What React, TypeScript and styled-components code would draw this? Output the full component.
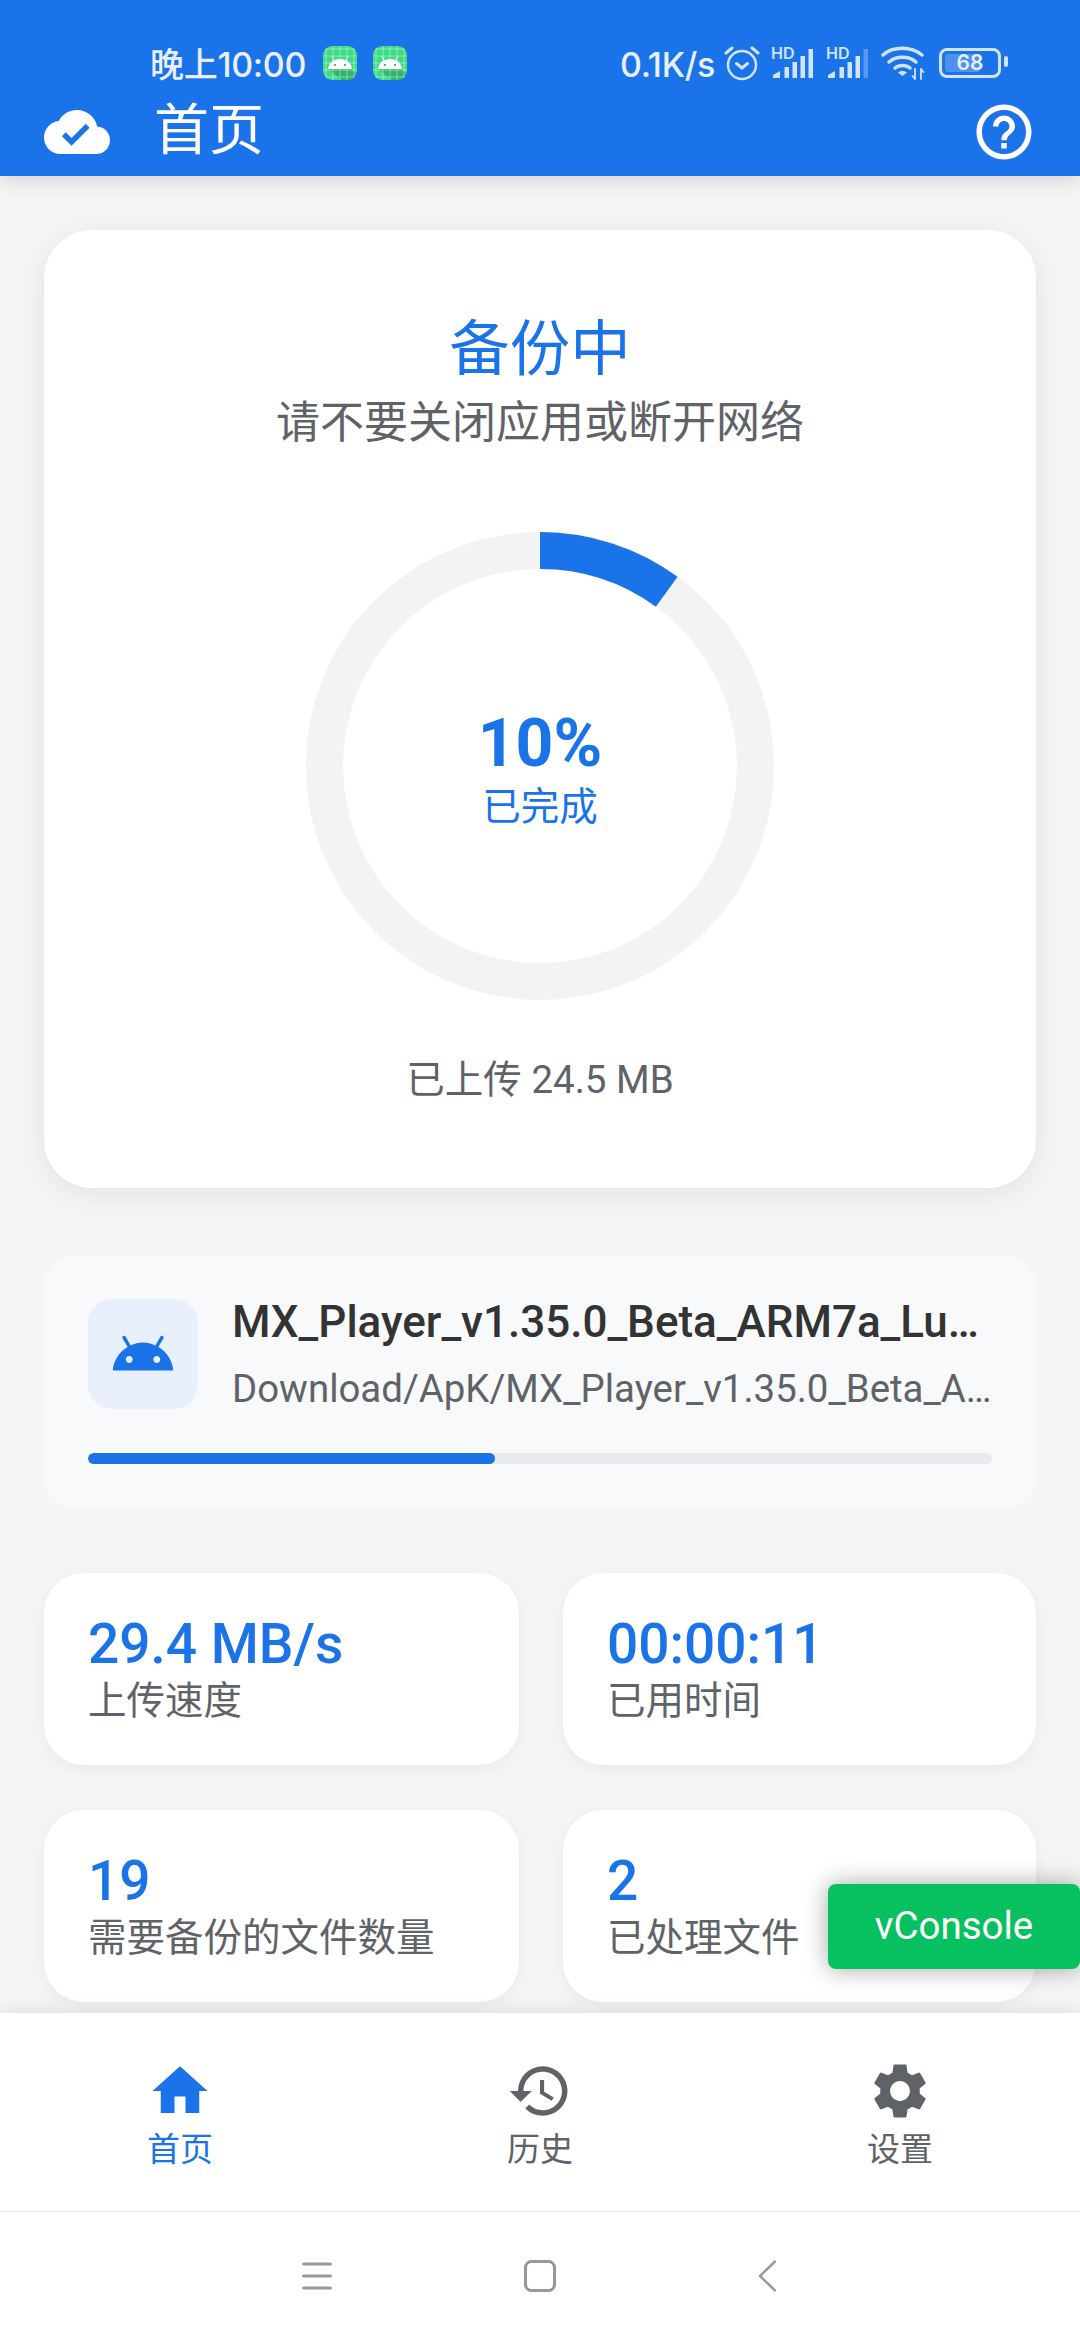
import styled, { createGlobalStyle } from "styled-components";
import { MdCloudDone, MdHelpOutline, MdHome, MdHistory, MdSettings } from "react-icons/md";

const BLUE = "#1a73e8";
const GREY = "#5f6368";

const GlobalStyle = createGlobalStyle`
  html, body { margin: 0; padding: 0; background: #f5f5f5; }
  * { box-sizing: border-box; }
  body { font-family: Roboto, "Noto Sans CJK SC", sans-serif; }
`;

const Page = styled.div`
  position: relative;
  width: 1080px;
  height: 2340px;
  display: flex;
  flex-direction: column;
  overflow: hidden;
  background: #f5f5f5;
`;

const Header = styled.header`
  height: 176px;
  flex: none;
  background: ${BLUE};
  box-shadow: 0 6px 18px rgba(0, 0, 0, 0.12);
  position: relative;
  z-index: 2;
  display: flex;
  flex-direction: column;
`;

const StatusBar = styled.div`
  height: 92px;
  padding: 34px 79px 0 150px;
  display: flex;
  align-items: center;
  justify-content: space-between;
  color: #e8f0fe;
`;

const StatusGroup = styled.div`
  display: flex;
  align-items: center;
`;

const StatusText = styled.span`
  font-family: Inter, "Noto Sans CJK SC", sans-serif;
  font-size: 34px;
  font-weight: 500;
  letter-spacing: -0.3px;
  line-height: 40px;
  margin-top: 3px;
`;

const AppBadges = styled.div`
  display: flex;
  gap: 16px;
  margin-left: 17px;
`;

const StatusIcons = styled.div`
  display: flex;
  align-items: center;
  gap: 11px;
  margin-left: 9px;
`;

const Battery = styled.div`
  position: relative;
  width: 62px;
  height: 30px;
  margin-left: 14px;
  border: 3.5px solid #d2e3fc;
  border-radius: 8px;
  font-family: Inter, sans-serif;
  font-size: 21px;
  font-weight: 600;
  line-height: 23px;
  text-align: center;
  color: #e8f0fe;
  &::before {
    content: "";
    position: absolute;
    left: 3px;
    top: 3px;
    bottom: 3px;
    width: 35px;
    background: rgba(255, 255, 255, 0.22);
    border-radius: 3px;
  }
  &::after {
    content: "";
    position: absolute;
    right: -10px;
    top: 5px;
    width: 4px;
    height: 11px;
    background: #d2e3fc;
    border-radius: 2px;
  }
`;

const BatteryLevel = styled.span`
  position: relative;
`;

const TitleRow = styled.div`
  flex: 1;
  padding: 0 43px 4px 44px;
  display: flex;
  align-items: center;
  color: #fff;
`;

const Title = styled.h1`
  margin: -4px 0 0 44px;
  flex: 1;
  font-size: 55px;
  font-weight: 400;
  line-height: 60px;
`;

const Main = styled.main`
  flex: 1;
  padding: 54px 44px 0;
  display: flex;
  flex-direction: column;
  overflow: hidden;
`;

const HeroCard = styled.section`
  height: 958px;
  flex: none;
  background: #fff;
  border-radius: 48px;
  box-shadow: 0 6px 30px rgba(0, 0, 0, 0.08);
  padding-top: 78px;
  display: flex;
  flex-direction: column;
  align-items: center;
`;

const HeroTitle = styled.h2`
  margin: 0;
  font-size: 60.500px;
  font-weight: 400;
  line-height: 84px;
  color: ${BLUE};
`;

const HeroSub = styled.p`
  margin: 0;
  font-size: 44px;
  line-height: 62px;
  color: ${GREY};
`;

const Ring = styled.div`
  position: relative;
  width: 468px;
  height: 468px;
  margin-top: 78px;
`;

const RingCenter = styled.div`
  position: absolute;
  inset: 0;
  padding-top: 8px;
  display: flex;
  flex-direction: column;
  align-items: center;
  justify-content: center;
  color: ${BLUE};
`;

const Percent = styled.div`
  font-size: 66px;
  font-weight: 700;
  line-height: 72px;
`;

const RingLabel = styled.div`
  margin-top: 2px;
  font-size: 38.500px;
  line-height: 50px;
`;

const Uploaded = styled.div`
  margin-top: 54px;
  font-size: 38.500px;
  line-height: 52px;
  color: ${GREY};
`;

const FileCard = styled.section`
  margin-top: 67px;
  flex: none;
  background: #f8f9fa;
  border-radius: 32px;
  padding: 44px;
`;

const FileRow = styled.div`
  height: 110px;
  display: flex;
  align-items: center;
  gap: 34px;
`;

const FileIcon = styled.div`
  width: 110px;
  height: 110px;
  flex: none;
  display: flex;
  align-items: center;
  justify-content: center;
  background: #e8f0fe;
  border-radius: 24px;
`;

const FileInfo = styled.div`
  flex: 1;
  min-width: 0;
`;

const FileName = styled.div<{ $muted?: boolean }>`
  font-size: ${({ $muted }) => ($muted ? "38.4px" : "44px")};
  font-weight: ${({ $muted }) => ($muted ? 400 : 500)};
  line-height: ${({ $muted }) => ($muted ? "52px" : "56px")};
  margin-top: ${({ $muted }) => ($muted ? "13px" : "0")};
  color: ${({ $muted }) => ($muted ? GREY : "#333")};
  white-space: nowrap;
  overflow: hidden;
  text-overflow: ellipsis;
`;

const Track = styled.div`
  height: 11px;
  margin-top: 44px;
  background: #e8eaed;
  border-radius: 6px;
  overflow: hidden;
`;

const Fill = styled.div`
  height: 100%;
  background: ${BLUE};
  border-radius: 6px;
`;

const StatGrid = styled.section`
  margin-top: 65px;
  display: grid;
  grid-template-columns: 475px 473px;
  grid-auto-rows: 192px;
  column-gap: 44px;
  row-gap: 45px;
`;

const StatCard = styled.div`
  background: #fff;
  border-radius: 40px;
  box-shadow: 0 4px 16px rgba(0, 0, 0, 0.05);
  padding: 40px 44px 0;
`;

const StatValue = styled.div`
  font-size: 55px;
  font-weight: 500;
  line-height: 62px;
  color: ${BLUE};
`;

const StatLabel = styled.div`
  font-size: 38.500px;
  line-height: 52px;
  color: ${GREY};
`;

const BottomNav = styled.nav`
  height: 198px;
  flex: none;
  background: #fff;
  box-shadow: 0 -4px 16px rgba(0, 0, 0, 0.08);
  position: relative;
  display: grid;
  grid-template-columns: repeat(3, 1fr);
`;

const Tab = styled.a<{ $active?: boolean }>`
  padding-top: 45px;
  display: flex;
  flex-direction: column;
  align-items: center;
  font-size: 33px;
  line-height: 44px;
  color: ${({ $active }) => ($active ? BLUE : GREY)};
`;

const TabIcon = styled.div`
  height: 66px;
  margin-bottom: 4px;
  font-size: 66px;
  line-height: 0;
`;

const SystemBar = styled.div`
  height: 129px;
  flex: none;
  background: #fff;
  border-top: 1px solid #e3e3e3;
  position: relative;
  display: grid;
  grid-template-columns: 302px 30px 192px 32px 202px 18px;
  align-items: center;
`;

const SysCell = styled.div<{ $col: number }>`
  grid-column: ${({ $col }) => $col};
  display: flex;
  line-height: 0;
`;

const VConsole = styled.div`
  position: absolute;
  left: 828px;
  top: 1884px;
  width: 252px;
  height: 85px;
  padding-bottom: 3px;
  display: flex;
  align-items: center;
  justify-content: center;
  background: #07c160;
  border-radius: 8px;
  box-shadow: 0 0 24px rgba(0, 0, 0, 0.35);
  color: #fff;
  font-size: 38.500px;
  z-index: 5;
`;

const AppBadge = () => (
  <svg width="34" height="34" viewBox="0 0 34 34">
    <defs>
      <clipPath id="badge">
        <rect width="34" height="34" rx="9" />
      </clipPath>
    </defs>
    <g clipPath="url(#badge)">
      <rect width="34" height="34" fill="#3ddc84" />
      <path d="M6 23H28L34 28V34H18z" fill="#1f7a4c" opacity="0.4" />
      <path
        d="M3 0V34M10 0V34M17 0V34M24 0V34M31 0V34M0 3H34M0 10H34M0 17H34M0 24H34M0 31H34"
        stroke="#fff"
        strokeOpacity="0.4"
        strokeWidth="1"
      />
      <path d="M5 23c.5-6 5.500-10 12-10s11.500 4 12 10z" fill="#fff" />
      <path d="M11 14l-2-4M23 14l2-4" stroke="#fff" strokeWidth="1" />
      <circle cx="12" cy="19" r="1" fill="#3a8f63" />
      <circle cx="22" cy="19" r="1" fill="#3a8f63" />
    </g>
  </svg>
);

const AlarmIcon = () => (
  <svg width="36" height="36" viewBox="0 0 36 36" fill="none" stroke="#d2e3fc" strokeWidth="2.500" strokeLinecap="round">
    <circle cx="18" cy="20" r="14" />
    <path d="M12.500 18.500l5.500 4.500 5.500-4.500" strokeWidth="3" />
    <path d="M2 8l6-5M34 8l-6-5" strokeWidth="3" />
  </svg>
);

const SignalIcon = ({ dim }: { dim?: boolean }) => (
  <svg width="44" height="32" viewBox="0 0 44 32" fill="#d2e3fc">
    <text x="0" y="12" fontSize="16" fontWeight="600" fontFamily="Inter, sans-serif">HD</text>
    <path d="M2 31v-3l7-4v7z" />
    <rect x="13.500" y="20" width="4.500" height="11" />
    <rect x="21.500" y="15" width="4.500" height="16" />
    <rect x="29.500" y="9" width="4.500" height="22" />
    <rect x="37.500" y="2" width="4.500" height="29" opacity={dim ? 0.35 : 1} />
  </svg>
);

const WifiIcon = () => (
  <svg width="44" height="36" viewBox="0 0 44 36" fill="none" stroke="#d2e3fc" strokeWidth="3.500" strokeLinecap="round">
    <path d="M2 10C12 1 30 1 41 10" />
    <path d="M8 17c7-6.500 20-6.500 27 0" />
    <path d="M14 23c4-3.500 11-3.500 15 0" />
    <path d="M21.500 31l-4.500-3.500c2.500-2 6.500-2 9 0z" fill="#d2e3fc" stroke="none" />
    <path d="M34 24v10M31.500 31l2.500 3M40 34v-10M42.500 27l-2.500-3" strokeWidth="1.800" />
  </svg>
);

const AndroidHead = () => (
  <svg width="66" height="66" viewBox="0 0 24 24" fill={BLUE}>
    <path d="M17.6 9.48l1.84-3.18c.18-.31.08-.7-.22-.88-.3-.18-.69-.08-.87.23l-1.860 3.220C15.070 8.240 13.570 7.800 12 7.800s-3.070.44-4.490 1.070L5.650 5.650c-.18-.31-.57-.41-.87-.23-.3.18-.4.57-.22.88L6.400 9.480C3.300 11.250 1.310 14.450 1 18h22c-.31-3.550-2.300-6.750-5.400-8.520zM7 15.250c-.69 0-1.250-.56-1.250-1.250s.56-1.250 1.250-1.250 1.250.56 1.250 1.250-.56 1.250-1.250 1.250zm10 0c-.69 0-1.250-.56-1.250-1.250s.56-1.250 1.250-1.250 1.250.56 1.250 1.250-.56 1.250-1.250 1.250z" />
  </svg>
);

const ProgressRing = ({ percent }: { percent: number }) => {
  const radius = 215.5;
  const length = 2 * Math.PI * radius;
  return (
    <svg width="468" height="468" viewBox="0 0 468 468" fill="none" strokeWidth="37">
      <circle cx="234" cy="234" r={radius} stroke="#f1f3f4" />
      <circle
        cx="234"
        cy="234"
        r={radius}
        stroke={BLUE}
        strokeDasharray={`${(length * percent) / 100} ${length}`}
        transform="rotate(-90 234 234)"
      />
    </svg>
  );
};

const stats = [
  { value: "29.4 MB/s", label: "上传速度" },
  { value: "00:00:11", label: "已用时间" },
  { value: "19", label: "需要备份的文件数量" },
  { value: "2", label: "已处理文件" },
];

const tabs = [
  { label: "首页", icon: <MdHome />, active: true },
  { label: "历史", icon: <MdHistory /> },
  { label: "设置", icon: <MdSettings /> },
];

export default function App() {
  return (
    <Page>
      <GlobalStyle />
      <Header>
        <StatusBar>
          <StatusGroup>
            <StatusText>晚上10:00</StatusText>
            <AppBadges>
              <AppBadge />
              <AppBadge />
            </AppBadges>
          </StatusGroup>
          <StatusGroup>
            <StatusText>0.1K/s</StatusText>
            <StatusIcons>
              <AlarmIcon />
              <SignalIcon />
              <SignalIcon dim />
              <WifiIcon />
            </StatusIcons>
            <Battery>
              <BatteryLevel>68</BatteryLevel>
            </Battery>
          </StatusGroup>
        </StatusBar>
        <TitleRow>
          <MdCloudDone size={66} />
          <Title>首页</Title>
          <MdHelpOutline size={66} />
        </TitleRow>
      </Header>

      <Main>
        <HeroCard>
          <HeroTitle>备份中</HeroTitle>
          <HeroSub>请不要关闭应用或断开网络</HeroSub>
          <Ring>
            <ProgressRing percent={10} />
            <RingCenter>
              <Percent>10%</Percent>
              <RingLabel>已完成</RingLabel>
            </RingCenter>
          </Ring>
          <Uploaded>已上传 24.5 MB</Uploaded>
        </HeroCard>

        <FileCard>
          <FileRow>
            <FileIcon>
              <AndroidHead />
            </FileIcon>
            <FileInfo>
              <FileName>MX_Player_v1.35.0_Beta_ARM7a_Lucky_Patcher.apk</FileName>
              <FileName $muted>Download/ApK/MX_Player_v1.35.0_Beta_ARM7a_Lucky_Patcher.apk</FileName>
            </FileInfo>
          </FileRow>
          <Track>
            <Fill style={{ width: "45%" }} />
          </Track>
        </FileCard>

        <StatGrid>
          {stats.map(({ value, label }) => (
            <StatCard key={label}>
              <StatValue>{value}</StatValue>
              <StatLabel>{label}</StatLabel>
            </StatCard>
          ))}
        </StatGrid>
      </Main>

      <BottomNav>
        {tabs.map(({ label, icon, active }) => (
          <Tab key={label} $active={active}>
            <TabIcon>{icon}</TabIcon>
            {label}
          </Tab>
        ))}
      </BottomNav>

      <SystemBar>
        <SysCell $col={2}>
          <svg width="30" height="32" viewBox="0 0 30 32" stroke="#999" strokeWidth="3" strokeLinecap="round">
            <path d="M1.500 4H28.500M1.500 16H28.500M1.500 28H28.500" />
          </svg>
        </SysCell>
        <SysCell $col={4}>
          <svg width="32" height="32" viewBox="0 0 32 32" fill="none" stroke="#999" strokeWidth="3">
            <rect x="1.500" y="1.500" width="29" height="29" rx="6" />
          </svg>
        </SysCell>
        <SysCell $col={6}>
          <svg width="18" height="32" viewBox="0 0 18 32" fill="none" stroke="#999" strokeWidth="2.500" strokeLinecap="round" strokeLinejoin="round">
            <path d="M17 1.500L2 16L17 30.500" />
          </svg>
        </SysCell>
      </SystemBar>

      <VConsole>vConsole</VConsole>
    </Page>
  );
}
